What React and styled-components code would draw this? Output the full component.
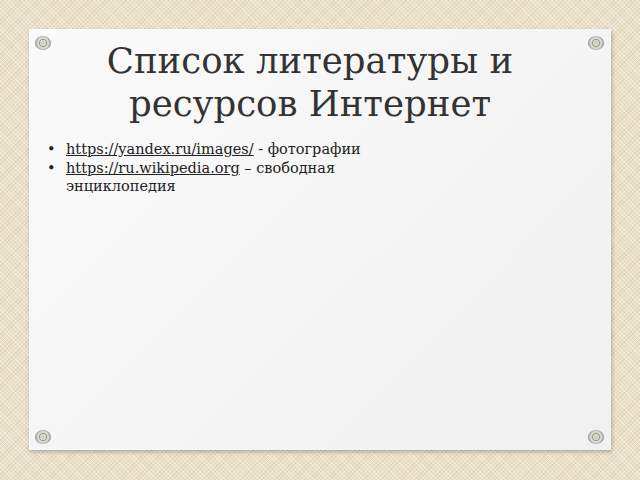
import React from "react";
import styled, { createGlobalStyle } from "styled-components";

const G = createGlobalStyle`
  html,body{margin:0;padding:0;}
  body{width:640px;height:480px;overflow:hidden;
    background-color:#ebe1c8;
    background-image:
      repeating-linear-gradient(45deg, rgba(255,255,255,0.3) 0 1px, transparent 1px 3px),
      repeating-linear-gradient(-45deg, rgba(160,140,100,0.14) 0 1px, transparent 1px 3px);
  }
`;
const Page = styled.div`
  width:640px;height:480px;box-sizing:border-box;padding:29px 29px 30px 29px;display:flex;
`;
const Card = styled.div`
  position:relative;flex:1;background:linear-gradient(135deg,#fafafa,#f0f0f0);
  box-shadow:1px 2px 4px rgba(0,0,0,0.25);
  padding:10px 20px 0 37px;font-family:"DejaVu Serif",serif;color:#333;
`;
const Title = styled.h1`
  margin:0 0 0 -37px;font-weight:normal;font-size:35.5px;line-height:43px;text-align:center;color:#333;
`;
const List = styled.ul`
  margin:15px 0 0 0;padding:0;list-style:none;font-size:14.5px;line-height:18.5px;color:#222;
`;
const Item = styled.li`
  position:relative;max-width:320px;
  &::before{content:"•";position:absolute;left:-19px;top:0;}
`;
const Link = styled.span`text-decoration:underline;`;
const Grommet = styled.div`
  position:absolute;width:16px;height:14px;border-radius:50%;
  background:radial-gradient(circle,#d8d2bd 0 3px,#9a9a9a 3.5px,#e6e6e6 5px,#8a8a8a 8px);
  ${p=>p.$t?"top:7px;":"bottom:6px;"}
  ${p=>p.$l?"left:6px;":"right:7px;"}
`;
export default function App(){
  return <><G/><Page><Card>
    <Grommet $t $l/><Grommet $t/><Grommet $l/><Grommet/>
    <Title>Список литературы и<br/>ресурсов Интернет</Title>
    <List>
      <Item><Link>https://yandex.ru/images/</Link> - фотографии</Item>
      <Item><Link>https://ru.wikipedia.org</Link> – свободная энциклопедия</Item>
    </List>
  </Card></Page></>;
}
